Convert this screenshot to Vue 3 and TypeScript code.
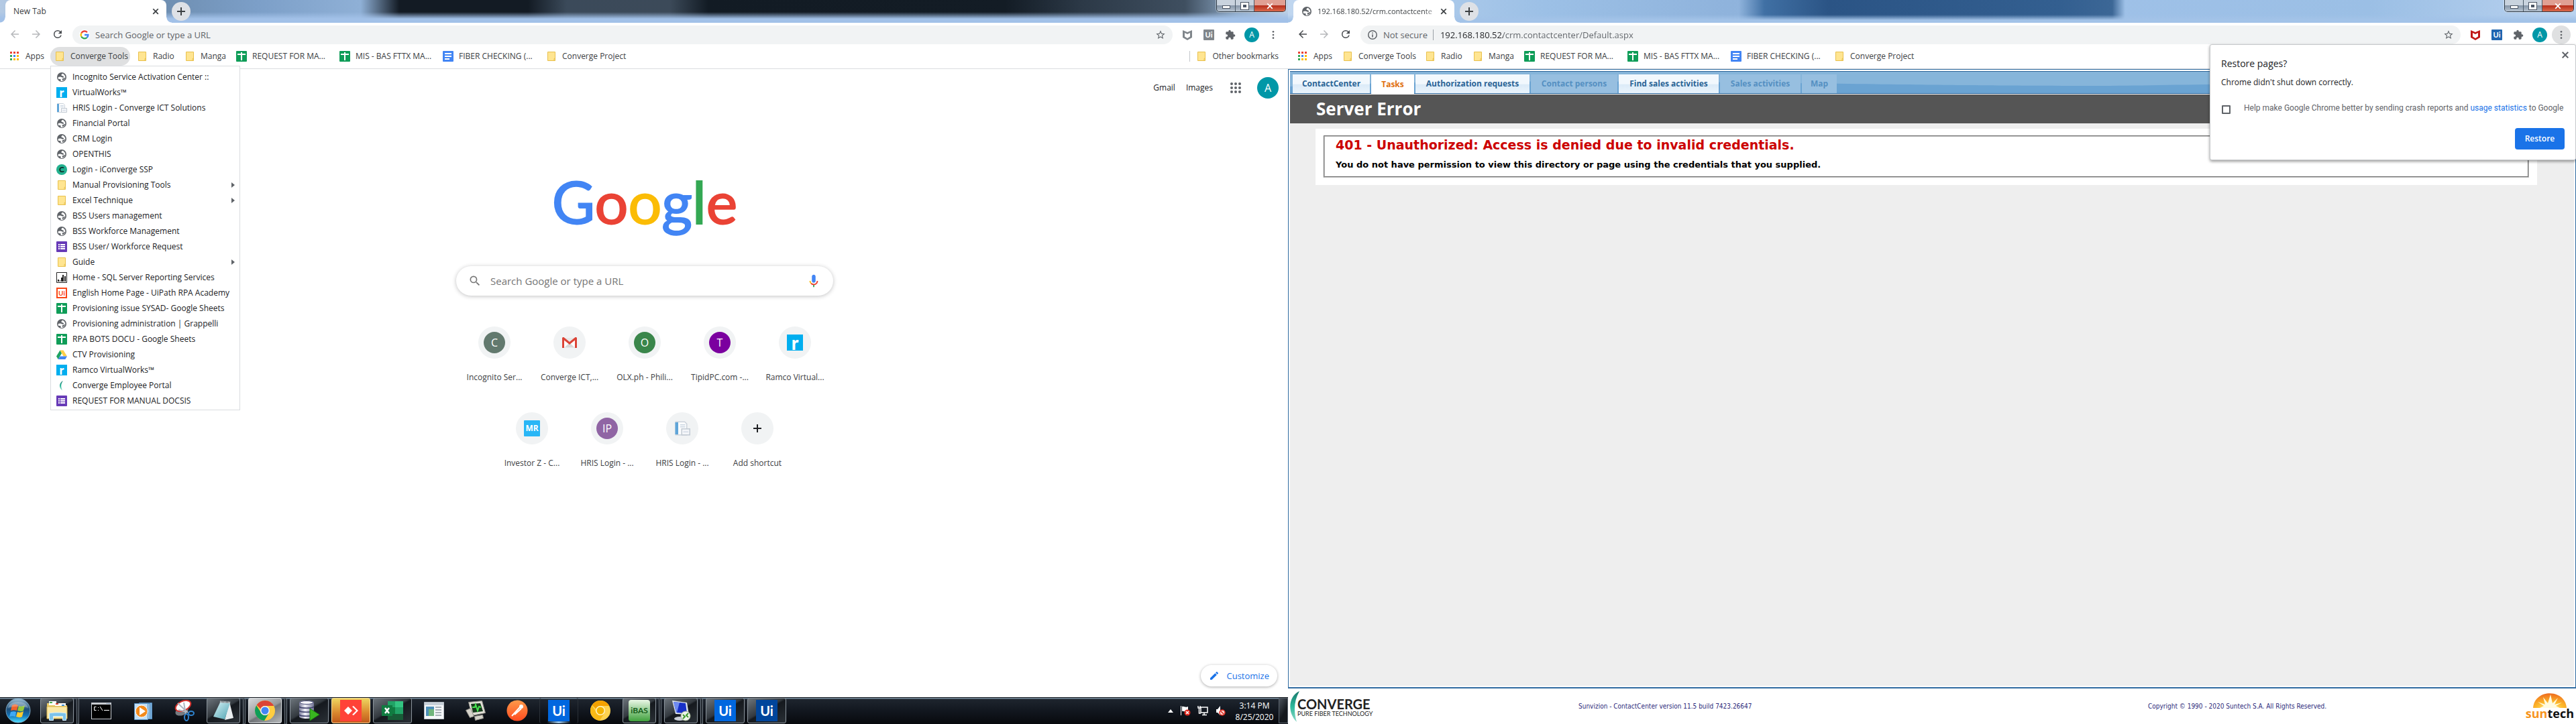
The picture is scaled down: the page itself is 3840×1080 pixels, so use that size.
<script setup lang="ts">
interface Bookmark {
  label: string
  icon: string
  width: number
  active?: boolean
}

interface MenuEntry {
  label: string
  icon?: string
  badge?: string
  text?: string
  submenu?: boolean
}

interface Shortcut {
  label: string
  disc?: string
  text?: string
  icon?: string
  badge?: string
}

interface Task {
  name: string
  icon?: string
  badge?: string
  text?: string
  state?: string
  stacked?: boolean
}

interface CrmTab {
  label: string
  width: number
  state: string
}

const bookmarks: Bookmark[] = [
  { label: 'Apps', icon: 'apps', width: 27 },
  { label: 'Converge Tools', icon: 'folder', width: 83, active: true },
  { label: 'Radio', icon: 'folder', width: 31 },
  { label: 'Manga', icon: 'folder', width: 37 },
  { label: 'REQUEST FOR MA...', icon: 'sheets', width: 114 },
  { label: 'MIS - BAS FTTX MA...', icon: 'sheets', width: 114 },
  { label: 'FIBER CHECKING (...', icon: 'docs', width: 114 },
  { label: 'Converge Project', icon: 'folder', width: 92 },
]

const windows = [
  { id: 'left', title: 'New Tab', secure: true },
  { id: 'right', title: '192.168.180.52/crm.contactcente', secure: false },
]

const menu: MenuEntry[] = [
  { label: 'Incognito Service Activation Center ::', icon: 'globe' },
  { label: 'VirtualWorks™', badge: 'ramco', text: 'r' },
  { label: 'HRIS Login - Converge ICT Solutions', icon: 'pages' },
  { label: 'Financial Portal', icon: 'globe' },
  { label: 'CRM Login', icon: 'globe' },
  { label: 'OPENTHIS', icon: 'globe' },
  { label: 'Login - iConverge SSP', badge: 'ssp', text: 'C' },
  { label: 'Manual Provisioning Tools', icon: 'folder', submenu: true },
  { label: 'Excel Technique', icon: 'folder', submenu: true },
  { label: 'BSS Users management', icon: 'globe' },
  { label: 'BSS Workforce Management', icon: 'globe' },
  { label: 'BSS User/ Workforce Request', icon: 'forms' },
  { label: 'Guide', icon: 'folder', submenu: true },
  { label: 'Home - SQL Server Reporting Services', icon: 'report' },
  { label: 'English Home Page - UiPath RPA Academy', badge: 'uipath', text: 'Ui' },
  { label: 'Provisioning issue SYSAD- Google Sheets', icon: 'sheets' },
  { label: 'Provisioning administration | Grappelli', icon: 'globe' },
  { label: 'RPA BOTS DOCU - Google Sheets', icon: 'sheets' },
  { label: 'CTV Provisioning', icon: 'drive' },
  { label: 'Ramco VirtualWorks™', badge: 'ramco', text: 'r' },
  { label: 'Converge Employee Portal', icon: 'leaf' },
  { label: 'REQUEST FOR MANUAL DOCSIS', icon: 'forms' },
]

const shortcuts: Shortcut[] = [
  { label: 'Incognito Ser...', disc: 'slate', text: 'C' },
  { label: 'Converge ICT,...', icon: 'gmail' },
  { label: 'OLX.ph - Phili...', disc: 'green', text: 'O' },
  { label: 'TipidPC.com -...', disc: 'purple', text: 'T' },
  { label: 'Ramco Virtual...', badge: 'ramco', text: 'r' },
  { label: 'Investor Z - C...', badge: 'investor', text: 'MR' },
  { label: 'HRIS Login - ...', disc: 'violet', text: 'IP' },
  { label: 'HRIS Login - ...', icon: 'pages' },
  { label: 'Add shortcut', icon: 'plus' },
]

const tasks: Task[] = [
  { name: 'Explorer', icon: 'explorer', state: 'open', stacked: true },
  { name: 'Command Prompt', icon: 'cmd' },
  { name: 'Media Player', icon: 'media' },
  { name: 'Snipping Tool', icon: 'snip' },
  { name: 'Notepad', icon: 'notepad', state: 'open', stacked: true },
  { name: 'Chrome', icon: 'chrome', state: 'current', stacked: true },
  { name: 'SQL Developer', icon: 'database', state: 'open' },
  { name: 'AnyDesk', icon: 'anydesk', state: 'alert' },
  { name: 'Excel', icon: 'excel', state: 'open' },
  { name: 'Program window', icon: 'window' },
  { name: 'PuTTY', icon: 'putty' },
  { name: 'Postman', icon: 'postman' },
  { name: 'UiPath Assistant', badge: 'ui-blue', text: 'Ui', state: 'glow' },
  { name: 'Chrome Canary', icon: 'canary' },
  { name: 'iBAS', badge: 'ibas', text: 'iBAS', state: 'open', stacked: true },
  { name: 'Remote Desktop', icon: 'remote', state: 'open', stacked: true },
  { name: 'UiPath Robot', badge: 'ui-blue', text: 'Ui', state: 'open' },
  { name: 'UiPath Studio', badge: 'ui-navy', text: 'Ui', state: 'open' },
]

const crmTabs: CrmTab[] = [
  { label: 'ContactCenter', width: 115, state: 'enabled' },
  { label: 'Tasks', width: 64, state: 'selected' },
  { label: 'Authorization requests', width: 170, state: 'enabled' },
  { label: 'Contact persons', width: 129, state: 'disabled' },
  { label: 'Find sales activities', width: 149, state: 'enabled' },
  { label: 'Sales activities', width: 120, state: 'disabled' },
  { label: 'Map', width: 52, state: 'disabled' },
]

const brand = [
  { letter: 'G', hue: 'blue' },
  { letter: 'o', hue: 'red' },
  { letter: 'o', hue: 'yellow' },
  { letter: 'g', hue: 'blue' },
  { letter: 'l', hue: 'green' },
  { letter: 'e', hue: 'red' },
]
</script>

<template>
  <svg class="sprite" aria-hidden="true">
    <defs>
      <linearGradient id="g-orb" x1="0" y1="0" x2="0" y2="1">
        <stop offset="0" stop-color="#9fc0d6" /><stop offset="0.45" stop-color="#1d4e7a" />
        <stop offset="0.7" stop-color="#1273b8" /><stop offset="1" stop-color="#4fe0ff" />
      </linearGradient>
      <linearGradient id="g-silver" x1="0" y1="0" x2="1" y2="0">
        <stop offset="0" stop-color="#7a7d9a" /><stop offset="0.4" stop-color="#f3f3fb" /><stop offset="1" stop-color="#6d7090" />
      </linearGradient>
      <linearGradient id="g-postman" x1="0" y1="0" x2="0" y2="1">
        <stop offset="0" stop-color="#ff9a4a" /><stop offset="1" stop-color="#ff4b1f" />
      </linearGradient>
      <linearGradient id="g-note" x1="0" y1="0" x2="1" y2="1">
        <stop offset="0" stop-color="#d6f2f6" /><stop offset="1" stop-color="#4fa3b2" />
      </linearGradient>
      <linearGradient id="g-leaf" x1="0" y1="0" x2="0" y2="1">
        <stop offset="0" stop-color="#17786c" /><stop offset="0.5" stop-color="#2eb89b" /><stop offset="1" stop-color="#8fd9c8" />
      </linearGradient>
      <radialGradient id="g-sun" cx="0.5" cy="1" r="1">
        <stop offset="0" stop-color="#fff3a0" /><stop offset="0.4" stop-color="#fdb92b" /><stop offset="1" stop-color="#ee6a1e" />
      </radialGradient>
      <symbol id="apps" viewBox="0 0 16 16">
        <path fill="#ea4335" d="M1 1h3v3H1zM6 1h3v3H6zM11 1h3v3h-3z" />
        <path fill="#34a853" d="M1 6h3v3H1z" /><path fill="#4285f4" d="M6 6h3v3H6z" /><path fill="#fbbc05" d="M11 6h3v3h-3z" />
        <path fill="#34a853" d="M1 11h3v3H1z" /><path fill="#fbbc05" d="M6 11h3v3H6zM11 11h3v3h-3z" />
      </symbol>
      <symbol id="folder" viewBox="0 0 16 16">
        <path fill="#ffe591" stroke="#e8c04c" d="M2.500 1.500h11v9.500l-1 1v2.500h-10z" />
        <path fill="#ffe591" stroke="#e8c04c" d="M12.500 11h1v3.500h-1.500v-2.500z" />
      </symbol>
      <symbol id="sheets" viewBox="0 0 16 16">
        <rect width="16" height="16" rx="1" fill="#0f9d58" /><path fill="#fff" d="M2 4h5V2h2v2h5v2H9v8H7V6H2z" />
      </symbol>
      <symbol id="docs" viewBox="0 0 16 16">
        <rect width="16" height="16" rx="1" fill="#4285f4" /><path fill="#fff" d="M3 3h10v2H3zM3 7h10v2H3zM3 11h7v2H3z" />
      </symbol>
      <symbol id="forms" viewBox="0 0 16 16">
        <rect width="16" height="16" rx="1" fill="#673ab7" /><path fill="#fff" d="M3 4h2v2H3zM6 4h7v2H6zM3 7h2v2H3zM6 7h7v2H6zM3 10h2v2H3zM6 10h7v2H6z" />
      </symbol>
      <symbol id="globe" viewBox="0 0 16 16">
        <circle cx="8" cy="8" r="7" fill="#5f6368" />
        <path fill="#fff" d="M9.500 2.800C8 3.500 7 4.500 7.600 5.600c.7 1 2.900.6 3.400 1.800.3.900-.6 1.500-1.500 1.300-1.300-.3-2.300-1.400-4.300-1.200-1.200.1-2.300.5-2.700 1.200.1 1 .4 1.800.9 2.500 1-.2 2.600-.3 3.100.4.4.8-.3 1.500.2 2.300 1.900.3 4-.5 5.200-2 .9-1.200 1.400-2.600 1.500-4-.2-1.800-1.600-4.200-3.900-5.100z" />
        <path fill="#5f6368" d="M8.500 10.200c1.200.3 2.600-.3 3.300-1.500l1.200.6c-.6 1.500-1.800 3-3.500 3.600-1-.1-.2-1.500-1-2.700z" />
      </symbol>
      <symbol id="pages" viewBox="0 0 16 16">
        <path fill="#fbfcfd" stroke="#ccd3db" d="M1.500 1.500h9l2 2v11h-11z" />
        <path fill="#5fa5d8" d="M1 2h3v12H1z" /><path fill="#cbd6e2" d="M6 4h5v1H6zM6 6h5v1H6z" />
        <path fill="#f4f6f9" stroke="#c2cad3" d="M7.500 8.500h8v6h-8z" /><path fill="#d4dbe6" d="M9 11h5v1H9z" />
      </symbol>
      <symbol id="report" viewBox="0 0 16 16">
        <path fill="#fff" stroke="#222" d="M.5.5h15v15H.5z" /><path fill="#222" d="M2 11h2v3H2zM5 12h1v2H5zM7 8h2v6H7zM9 4h2v10H9zM12 6h2v8h-2z" />
      </symbol>
      <symbol id="drive" viewBox="0 0 16 16">
        <path fill="#1ea362" d="M5.500 1.500L8 6 2.700 15 0 10.500z" /><path fill="#ffcf48" d="M5.500 1.500h5L16 10.500h-5.300z" />
        <path fill="#4285f4" d="M5.500 10.500H16L13.300 15H2.700z" />
      </symbol>
      <symbol id="leaf" viewBox="0 0 16 16"><path fill="url(#g-leaf)" d="M10 1C4 4 3 11 9 15.500 6.500 10 6.500 6 10 1z" /></symbol>
      <symbol id="gmail" viewBox="0 0 24 24">
        <path fill="#e8e8e8" d="M3 5h18v15H3z" /><path fill="#fff" d="M4 7l8 6 8-6v12H4z" /><path fill="#d8d8d8" d="M5 19l7-7 7 7z" />
        <path fill="#db4437" d="M1 5.500C1 4 3 3.600 4 4.500l8 6.500 8-6.500c1-.9 3-.5 3 1V20h-3V8.500L12 15 4 8.500V20H1z" />
      </symbol>
      <symbol id="plus" viewBox="0 0 24 24"><path fill="#202124" d="M11 6h2v5h5v2h-5v5h-2v-5H6v-2h5z" /></symbol>
      <symbol id="back" viewBox="0 0 24 24"><path d="M20 11H7.830l5.590-5.590L12 4l-8 8 8 8 1.410-1.410L7.830 13H20z" /></symbol>
      <symbol id="forward" viewBox="0 0 24 24"><path d="M4 11h12.170l-5.590-5.590L12 4l8 8-8 8-1.410-1.410L16.170 13H4z" /></symbol>
      <symbol id="reload" viewBox="0 0 24 24"><path d="M17.650 6.350A7.960 7.960 0 0 0 12 4a8 8 0 1 0 7.730 10h-2.080A6 6 0 1 1 12 6c1.660 0 3.140.690 4.220 1.780L13 11h7V4z" /></symbol>
      <symbol id="star" viewBox="0 0 24 24"><path d="M22 9.240l-7.190-.62L12 2 9.190 8.630 2 9.240l5.460 4.730L5.820 21 12 17.270 18.180 21l-1.630-7.030zM12 15.400l-3.760 2.270 1-4.280-3.320-2.880 4.380-.38L12 6.100l1.710 4.040 4.380.38-3.320 2.880 1 4.280z" /></symbol>
      <symbol id="puzzle" viewBox="0 0 24 24"><path d="M20.500 11H19V7a2 2 0 0 0-2-2h-4V3.500a2.500 2.500 0 0 0-5 0V5H4a2 2 0 0 0-2 2v3.800h1.500a2.700 2.700 0 0 1 0 5.400H2V20c0 1.100.9 2 2 2h3.800v-1.500a2.700 2.700 0 0 1 5.400 0V22H17a2 2 0 0 0 2-2v-4h1.500a2.500 2.500 0 0 0 0-5z" /></symbol>
      <symbol id="dots" viewBox="0 0 24 24"><circle cx="12" cy="5" r="2" /><circle cx="12" cy="12" r="2" /><circle cx="12" cy="19" r="2" /></symbol>
      <symbol id="shield" viewBox="0 0 16 16"><path d="M1 1l7 3 7-3v11l-7 4-7-4zm3 4v5.500L8 13l4-2.500V5L8 7z" /></symbol>
      <symbol id="info" viewBox="0 0 16 16"><path d="M8 1a7 7 0 1 0 0 14A7 7 0 0 0 8 1zm0 1.500a5.500 5.500 0 1 1 0 11 5.500 5.500 0 0 1 0-11zM7.200 4.500h1.600V6H7.200zM7.200 7.200h1.600v4.300H7.200z" /></symbol>
      <symbol id="google" viewBox="0 0 16 16">
        <g fill="none" stroke-width="2.400">
          <path stroke="#ea4335" d="M12 4.200A5.400 5.400 0 0 0 3.200 5.500" /><path stroke="#fbbc05" d="M3.200 5.500a5.400 5.400 0 0 0 0 5" />
          <path stroke="#34a853" d="M3.200 10.500A5.400 5.400 0 0 0 11.500 12.100" /><path stroke="#4285f4" d="M8 8h5.400A5.400 5.400 0 0 1 11.500 12.100" />
        </g>
      </symbol>
      <symbol id="search" viewBox="0 0 24 24"><path d="M15.500 14h-.79l-.28-.27A6.470 6.470 0 0 0 16 9.500 6.500 6.500 0 1 0 9.500 16c1.610 0 3.090-.59 4.230-1.570l.27.280v.79l5 4.990L20.490 19zm-6 0a4.500 4.500 0 1 1 0-9 4.500 4.500 0 0 1 0 9z" /></symbol>
      <symbol id="mic" viewBox="0 0 24 24">
        <path fill="#4285f4" d="M12 15c1.660 0 3-1.310 3-2.970V4.980C15 3.320 13.660 2 12 2S9 3.320 9 4.980v7.050C9 13.690 10.340 15 12 15z" />
        <path fill="#34a853" d="M11 18.080h2V22h-2z" /><path fill="#fbbc05" d="M7.050 16.870A6.950 6.950 0 0 1 5 12h2c0 1.450.56 2.420 1.470 3.380z" />
        <path fill="#ea4335" d="M12 16.930a4.970 4.970 0 0 1-3.540-1.550l-1.410 1.490A6.950 6.950 0 0 0 12 18.900c3.870 0 6.990-2.920 6.990-7h-1.990c0 2.920-2.240 5.030-5 5.030z" />
      </symbol>
      <symbol id="grid" viewBox="0 0 16 16">
        <circle v-for="n in 9" :key="n" :cx="2 + ((n - 1) % 3) * 6" :cy="2 + Math.floor((n - 1) / 3) * 6" r="2" />
      </symbol>
      <symbol id="pencil" viewBox="0 0 24 24"><path d="M3 17.250V21h3.750L17.810 9.940l-3.750-3.750zM20.710 7.040a1 1 0 0 0 0-1.410l-2.340-2.340a1 1 0 0 0-1.410 0l-1.830 1.830 3.750 3.750z" /></symbol>
      <symbol id="cross" viewBox="0 0 16 16"><path d="M3 4.400L4.400 3 8 6.600 11.600 3 13 4.400 9.400 8l3.600 3.600-1.400 1.400L8 9.400 4.400 13 3 11.600 6.600 8z" /></symbol>
      <symbol id="add" viewBox="0 0 16 16"><path d="M7 2h2v5h5v2H9v5H7V9H2V7h5z" /></symbol>

      <symbol id="orb" viewBox="0 0 38 38">
        <circle cx="19" cy="19" r="18" fill="url(#g-orb)" stroke="#7aa3be" />
        <path fill="#f0642c" d="M10 11c3-2 6-2 9 0l-2 8c-3-1-6-1-9 0z" /><path fill="#94c93d" d="M20 12c3 1 6 1 9-1l-2 8c-3 2-5 1-9 0z" />
        <path fill="#3fa9f5" d="M8 21c3-1 6-1 8 0l-1 7c-3-1-6-1-9 0z" /><path fill="#ffcb2e" d="M18 21c3 1 6 1 9-1l-2 8c-3 2-6 1-9 0z" />
        <path fill="#fff" opacity="0.250" d="M4 15C6 3 32 3 34 15c-8-3-22-3-30 0z" />
      </symbol>
      <symbol id="explorer" viewBox="0 0 32 32">
        <path fill="#e9c964" d="M1 5h10l2 3h18v20H1z" /><path fill="#fff" d="M4 2h11v6H4zM13 5h16v4H13z" /><path fill="#4caf50" d="M5 3h4v2H5z" /><path fill="#d9432f" d="M14 5h4v2h-4z" /><path fill="#3d8fd8" d="M23 7h4v2h-4z" />
        <path fill="#fbe9a6" stroke="#d9b44c" d="M1 10h30v18H1z" /><path fill="#7cc3ea" stroke="#d6f0ff" d="M4.500 20.500c0-2 25-2 25 0v10h-5v-6h-14v6h-6z" />
      </symbol>
      <symbol id="cmd" viewBox="0 0 32 32">
        <path fill="#c9cdd2" d="M1 4h30v25H1z" /><path fill="#000" d="M2 7h28v21H2z" /><path fill="#4d6d9e" d="M24 5h1v1h-1zM26 5h1v1h-1zM28 5h1v1h-1z" />
        <path fill="none" stroke="#fff" d="M8.500 10.500h-3v5h3M11.500 11v1M11.500 15v1M14 10l4 6M20 15.500h8" />
      </symbol>
      <symbol id="media" viewBox="0 0 32 32">
        <path fill="#7fb2dd" stroke="#4d86b8" d="M10.500 4.500h19v24h-19z" /><path fill="#a4ccec" stroke="#4d86b8" d="M7.500 5.500h19v23h-19z" /><path fill="#c2dff5" stroke="#5a93c4" d="M3.500 5.500h20v24h-20z" />
        <circle cx="14" cy="17" r="9" fill="#f28a1c" stroke="#fff" /><path fill="#fff" d="M11 11l9 6-9 6z" />
      </symbol>
      <symbol id="snip" viewBox="0 0 32 32">
        <ellipse cx="12" cy="17" rx="10" ry="6" fill="#777c82" transform="rotate(-20 12 17)" />
        <ellipse cx="14" cy="9" rx="12" ry="7" fill="#fff" stroke="#d3312d" stroke-width="2" transform="rotate(-25 14 9)" />
        <path fill="none" stroke="#aeb7c1" stroke-width="2" d="M6 5l15 14M15 4l3 18M7 15l13 3" /><ellipse cx="26" cy="20" rx="4" ry="3" fill="none" stroke="#2f84d0" stroke-width="2" /><ellipse cx="19" cy="26" rx="3" ry="5" fill="none" stroke="#2f84d0" stroke-width="2" />
      </symbol>
      <symbol id="notepad" viewBox="0 0 32 32">
        <path fill="#e9eef0" d="M25 3l6 24-13 3z" /><path fill="url(#g-note)" d="M11 4l15 1-8 24L1 25z" /><path fill="none" stroke="#e4eaec" stroke-width="3" stroke-dasharray="1 1" d="M11 3l15 1" />
      </symbol>
      <symbol id="chrome" viewBox="0 0 32 32">
        <circle cx="16" cy="16" r="15" fill="#ffcd40" /><path fill="#db4437" d="M16 1a15 15 0 0 1 13.200 8H16a7 7 0 0 0-6.500 4.500L3.600 7.800A15 15 0 0 1 16 1z" />
        <path fill="#0f9d58" d="M3.200 8.200A15 15 0 0 0 15 31l6.500-10.500a7 7 0 0 1-11.600-1.800z" /><circle cx="16" cy="16" r="7" fill="#f1f1f1" /><circle cx="16" cy="16" r="5.500" fill="#4285f4" />
      </symbol>
      <symbol id="canary" viewBox="0 0 32 32">
        <circle cx="16" cy="16" r="15" fill="#ffd34f" /><path fill="#f4a100" d="M16 1a15 15 0 0 1 13.200 8H16a7 7 0 0 0-6.500 4.500L3.600 7.800A15 15 0 0 1 16 1z" />
        <path fill="#f9b916" d="M3.200 8.200A15 15 0 0 0 15 31l6.500-10.500a7 7 0 0 1-11.600-1.800z" /><circle cx="16" cy="16" r="7" fill="#fff3c4" /><circle cx="16" cy="16" r="5.500" fill="#f4b400" />
      </symbol>
      <symbol id="database" viewBox="0 0 32 32">
        <path fill="url(#g-silver)" d="M1 4c0-4 22-4 22 0v21c0 4-22 4-22 0z" /><ellipse cx="12" cy="4" rx="10" ry="2.500" fill="#f6f6fc" stroke="#4b4e78" /><path fill="none" stroke="#3f426c" stroke-width="1.500" d="M1 10c2 3 20 3 22 0M1 16c2 3 20 3 22 0M1 22c2 3 20 3 22 0" />
        <path fill="#39b620" stroke="#1c7a10" d="M17 13l14 9-14 9z" />
      </symbol>
      <symbol id="anydesk" viewBox="0 0 32 32"><path fill="#ff4238" d="M0 0h32v32H0z" /><path fill="#fff" d="M12 10l6 6-6 6-6-6zM18 10l2-1 7 7-7 7-2-1 6-6z" /></symbol>
      <symbol id="excel" viewBox="0 0 32 32">
        <path fill="#21a366" d="M9 2h11v9H9z" /><path fill="#33c481" d="M20 2h12v9H20z" /><path fill="#107c41" d="M9 11h11v10H9z" /><path fill="#21a366" d="M20 11h12v10H20z" /><path fill="#185c37" d="M9 21h23v9H9z" />
        <path fill="#107c41" d="M0 8h16v16H0z" /><path stroke="#fff" stroke-width="2.500" d="M5 12l6 8M11 12l-6 8" />
      </symbol>
      <symbol id="window" viewBox="0 0 32 32">
        <path fill="#f5f7f9" stroke="#b5bcc4" d="M1.500 3.500h29v25h-29z" /><path fill="#c7d0d9" d="M2 4h28v4H2z" /><path fill="#4d8fb8" d="M4 10h12v14H4z" /><path fill="#71b57c" d="M8 14h8v10H8z" /><path fill="#a8b0b8" d="M18 10h9v2h-9zM18 14h9v2h-9zM18 18h9v2h-9zM18 22h9v2h-9z" />
      </symbol>
      <symbol id="putty" viewBox="0 0 32 32">
        <path fill="#e2e0d8" stroke="#8d8b84" d="M5.500 3.500l20-2 5 18-20 4z" /><path fill="#173a1c" d="M9 6l14-1 4 12-15 2z" /><path fill="none" stroke="#45e34d" stroke-width="2" d="M11 11h4l1-4 3 9 2-6 3 1" /><path fill="#d5d3ca" stroke="#8d8b84" d="M14.500 24.500l12-2 1 5-12 3zM1.500 15.500l7-3 5 12-6 2z" />
      </symbol>
      <symbol id="postman" viewBox="0 0 32 32"><circle cx="16" cy="16" r="15.500" fill="url(#g-postman)" /><path fill="none" stroke="#fff" stroke-width="2" d="M8 24l12-13M12 22l10-9" /><circle cx="22" cy="10" r="3" fill="#fff" /></symbol>
      <symbol id="remote" viewBox="0 0 32 32">
        <path fill="#dfe5ec" d="M3 1l22 3 3 18-20-1z" /><path fill="#1730c8" d="M5 3l18 2 2 15-16-1z" /><path fill="#6f8bf0" d="M5 3l9 1-4 15H9z" /><ellipse cx="14" cy="28" rx="8" ry="3" fill="#c9ced6" />
        <circle cx="23" cy="24" r="7" fill="#eef3ea" stroke="#9fb092" /><path fill="none" stroke="#3d9a2c" stroke-width="2" d="M19 22l3 3-3 3M27 20l-3 3 3 3" />
      </symbol>
      <symbol id="flag" viewBox="0 0 16 16"><path fill="#fff" d="M1 1h1v14H1zM3 2c3-1 5 2 9 0v7c-4 2-6-1-9 0z" /><circle cx="11" cy="11" r="4.500" fill="#e0261b" /><path stroke="#fff" stroke-width="1.500" d="M9 9l4 4M13 9l-4 4" /></symbol>
      <symbol id="network" viewBox="0 0 16 16"><path fill="none" stroke="#fff" stroke-width="1.500" d="M5 3h10v8H5zM10 11v3M7 14.500h7M1 1v3h3V1M2.500 4v8H5" /></symbol>
      <symbol id="speaker" viewBox="0 0 16 16"><path fill="#fff" d="M2 6h2l4-5v14l-4-4H2z" /><circle cx="11" cy="11" r="4" fill="#f6d6d3" stroke="#e0261b" stroke-width="1.500" /><path stroke="#e0261b" stroke-width="1.500" d="M8.500 8.500l5 5" /></symbol>
    </defs>
  </svg>

  <main class="desktop">
    <section v-for="win in windows" :key="win.id" class="screen" :class="win.id">
      <header class="titlebar">
        <div class="tab">
          <svg v-if="!win.secure" class="i16 globe"><use href="#globe" /></svg>
          <span class="tab-title">{{ win.title }}</span>
          <button class="plain tab-close" aria-label="Close tab"><svg class="i14"><use href="#cross" /></svg></button>
        </div>
        <button class="plain new-tab" aria-label="New tab"><svg class="i16"><use href="#add" /></svg></button>
        <div class="caption">
          <button class="cap-min" aria-label="Minimize"><span></span></button>
          <button class="cap-max" aria-label="Restore"><span></span></button>
          <button class="cap-close" aria-label="Close"><svg class="i14"><use href="#cross" /></svg></button>
        </div>
      </header>

      <div class="toolbar">
        <button class="plain nav" :class="{ dim: win.secure }" aria-label="Back"><svg class="i18"><use href="#back" /></svg></button>
        <button class="plain nav dim" aria-label="Forward"><svg class="i18"><use href="#forward" /></svg></button>
        <button class="plain nav" aria-label="Reload"><svg class="i18"><use href="#reload" /></svg></button>
        <div class="omnibox">
          <template v-if="win.secure">
            <svg class="i16 g-mark"><use href="#google" /></svg>
            <input class="address" type="text" aria-label="Address" placeholder="Search Google or type a URL" />
          </template>
          <template v-else>
            <svg class="i16"><use href="#info" /></svg>
            <span class="not-secure">Not secure</span>
            <input class="address url" type="text" aria-label="Address" value="192.168.180.52/crm.contactcenter/Default.aspx" />
          </template>
          <button class="plain" aria-label="Bookmark"><svg class="i16"><use href="#star" /></svg></button>
        </div>
        <button class="plain ext shield" aria-label="Safe browsing"><svg class="i16"><use href="#shield" /></svg></button>
        <button class="plain ext" aria-label="UiPath"><span class="badge ui-ext">Ui</span></button>
        <button class="plain ext" aria-label="Extensions"><svg class="i16"><use href="#puzzle" /></svg></button>
        <button class="plain ext profile">A</button>
        <button class="plain ext more" aria-label="Menu"><svg class="i16"><use href="#dots" /></svg></button>
      </div>

      <nav class="bookmarks">
        <div v-for="b in bookmarks" :key="b.label" class="bookmark-slot">
          <a href="#" class="bookmark" :class="{ active: b.active && win.secure }">
            <svg class="i16"><use :href="'#' + b.icon" /></svg>
            <span :style="{ width: b.width + 'px' }">{{ b.label }}</span>
          </a>
          <ul v-if="b.active && win.secure" class="menu">
            <li v-for="m in menu" :key="m.label">
              <a href="#">
                <svg v-if="m.icon" class="i16"><use :href="'#' + m.icon" /></svg>
                <span v-else class="badge" :class="m.badge">{{ m.text }}</span>
                <span class="menu-label">{{ m.label }}</span>
                <span v-if="m.submenu" class="arrow"></span>
              </a>
            </li>
          </ul>
        </div>
        <a v-if="win.secure" href="#" class="bookmark other">
          <svg class="i16"><use href="#folder" /></svg><span>Other bookmarks</span>
        </a>
      </nav>

      <template v-if="win.secure">
        <div class="ntp">
          <div class="ntp-top">
            <a href="#">Gmail</a><a href="#">Images</a>
            <button class="plain" aria-label="Google apps"><svg class="i16"><use href="#grid" /></svg></button>
            <button class="plain account">A</button>
          </div>
          <h1 class="brand"><span v-for="(c, i) in brand" :key="i" :class="c.hue">{{ c.letter }}</span></h1>
          <label class="search">
            <svg class="i20"><use href="#search" /></svg>
            <input type="text" placeholder="Search Google or type a URL" />
            <svg class="i22"><use href="#mic" /></svg>
          </label>
          <div class="tiles">
            <a v-for="(s, i) in shortcuts" :key="i" href="#" class="tile">
              <span class="tile-icon">
                <span v-if="s.disc" class="disc" :class="s.disc">{{ s.text }}</span>
                <svg v-else-if="s.icon" class="i24"><use :href="'#' + s.icon" /></svg>
                <span v-else class="badge large" :class="s.badge">{{ s.text }}</span>
              </span>
              <span class="tile-label">{{ s.label }}</span>
            </a>
          </div>
          <button class="customize"><svg class="i16"><use href="#pencil" /></svg>Customize</button>
        </div>

        <footer class="taskbar">
          <button class="plain start" aria-label="Start"><svg class="i38"><use href="#orb" /></svg></button>
          <div v-for="t in tasks" :key="t.name" class="task-slot" :class="{ stacked: t.stacked }">
            <button class="task" :class="t.state" :aria-label="t.name">
              <svg v-if="t.icon" class="i32"><use :href="'#' + t.icon" /></svg>
              <span v-else class="badge huge" :class="t.badge">{{ t.text }}</span>
            </button>
          </div>
          <div class="tray">
            <span class="tray-arrow"></span>
            <svg class="i16"><use href="#flag" /></svg>
            <svg class="i16"><use href="#network" /></svg>
            <svg class="i16"><use href="#speaker" /></svg>
            <div class="clock"><span>3:14 PM</span><span>8/25/2020</span></div>
            <button class="peek" aria-label="Show desktop"></button>
          </div>
        </footer>
      </template>

      <template v-else>
        <aside class="restore">
          <button class="plain restore-close" aria-label="Dismiss"><svg class="i16"><use href="#cross" /></svg></button>
          <h2>Restore pages?</h2>
          <p>Chrome didn't shut down correctly.</p>
          <div class="consent">
            <input id="crash-reports" type="checkbox" />
            <label for="crash-reports">Help make Google Chrome better by sending crash reports and <a href="#">usage statistics</a> to Google</label>
          </div>
          <button class="restore-button">Restore</button>
        </aside>

        <div class="crm">
          <nav class="crm-tabs">
            <svg class="wave" viewBox="0 0 1913 32" preserveAspectRatio="none" aria-hidden="true">
              <path fill="#6aa3d2" d="M0 22C200 12 500 14 750 17S1000 20 1150 21s300-7 763-4v15H0z" />
            </svg>
            <button v-for="t in crmTabs" :key="t.label" class="crm-tab" :class="t.state" :style="{ width: t.width + 'px' }">{{ t.label }}</button>
          </nav>
          <div class="error-head"><h1>Server Error</h1></div>
          <div class="error-body">
            <div class="card">
              <div class="fieldset">
                <h2>401 - Unauthorized: Access is denied due to invalid credentials.</h2>
                <h3>You do not have permission to view this directory or page using the credentials that you supplied.</h3>
              </div>
            </div>
          </div>
        </div>
        <footer class="crm-foot">
          <div class="converge">
            <svg class="converge-leaf" viewBox="0 0 14 46"><path fill="url(#g-leaf)" d="M14 0C-3 8-4 32 10 46 5 30 6 14 14 0z" /></svg>
            <div><strong>CONVERGE</strong><small>PURE FIBER TECHNOLOGY</small></div>
          </div>
          <span class="version">Sunvizion - ContactCenter version 11.5 build 7423.26647</span>
          <span class="copyright">Copyright © 1990 - 2020 Suntech S.A. All Rights Reserved.</span>
          <div class="suntech">
            <svg viewBox="0 0 50 22"><path fill="url(#g-sun)" d="M0 22C2-7 48-7 50 22z" /><path fill="#fffbe0" d="M10 22l6-3-9-6 11 4-3-11 7 9 4-13 3 13 8-8-5 10 11-3-9 5 6 3z" /></svg>
            <strong><span>sun</span>tech</strong>
          </div>
        </footer>
      </template>
    </section>
  </main>
</template>

<style>
body {
  margin: 0;
  background: #fff;
}
</style>

<style scoped>
.sprite { position: absolute; width: 0; height: 0; }
.desktop {
  display: flex;
  min-height: 100vh;
  font-family: "Open Sans", "Noto Sans", sans-serif;
  font-size: 12px;
  line-height: 16px;
  color: #202124;
}
.desktop * { box-sizing: border-box; }
.desktop svg { display: block; flex: none; fill: currentColor; }
.screen { position: relative; flex: 1; min-width: 0; display: flex; flex-direction: column; background: #fff; }
a { color: inherit; text-decoration: none; }
button, input { font: inherit; color: inherit; margin: 0; }
h1, h2, h3, p, ul { margin: 0; padding: 0; }
ul { list-style: none; }
.plain { border: 0; padding: 0; background: none; display: flex; align-items: center; justify-content: center; flex: none; }
.i14 { width: 14px; height: 14px; }
.i16 { width: 16px; height: 16px; }
.i18 { width: 18px; height: 18px; }
.i20 { width: 20px; height: 20px; }
.i22 { width: 22px; height: 22px; }
.i24 { width: 24px; height: 24px; }
.i32 { width: 32px; height: 32px; }
.i38 { width: 38px; height: 38px; }

/* title bar */
.titlebar { display: flex; height: 34px; padding-left: 8px; }
.left .titlebar {
  background:
    linear-gradient(180deg, transparent 18px, #a2c1e8 28px),
    linear-gradient(90deg, #b4cae4 0%, #6f8fb2 13%, #7c9fc8 20%, #8fb0d6 28%, #131b24 31%, #131b24 41%, #3b4a5a 44%, #3c4a59 52%, #121b24 55%, #131c25 78%, #2c3947 84%, #3f4f60 92%, #8ea9c6 96%, #bcd0e6 100%);
}
.right .titlebar {
  background:
    linear-gradient(180deg, transparent 22px, #a3c3e8 30px),
    linear-gradient(90deg, transparent 35%, #4070a4 37%, #2b5485 42%, #335f90 60%, #3c6796 64%, transparent 65%),
    linear-gradient(90deg, #c0d6ef 0%, #9cc0e6 20%, #8fb3dc 34%, #9fc1e8 60%, #9bbfe5 84%, #b9d2ef 100%);
}
.tab { position: relative; display: flex; align-items: center; width: 240px; padding: 0 9px 0 12px; background: #fff; border-radius: 8px 8px 0 0; }
.tab::before, .tab::after { content: ""; position: absolute; bottom: 0; width: 8px; height: 8px; }
.tab::before { right: 100%; background: radial-gradient(circle at 0 0, transparent 7px, #fff 8px); }
.tab::after { left: 100%; background: radial-gradient(circle at 100% 0, transparent 7px, #fff 8px); }
.tab-title { flex: 1; white-space: nowrap; color: #3c4043; }
.right .tab-title { font-size: 11px; mask-image: linear-gradient(90deg, #000 88%, transparent); }
.globe { margin-right: 8px; color: #5f6368; }
.tab-close { color: #3c4043; }
.new-tab { width: 28px; height: 28px; margin: 3px 0 0 8px; border-radius: 50%; background: #dee1e6; color: #3c4043; }
.caption { display: flex; height: 18px; margin: 0 3px 0 auto; border: 1px solid #2c3844; border-top: 0; border-radius: 0 0 5px 5px; overflow: hidden; box-shadow: 0 0 0 1px #ffffff66; }
.caption button { display: flex; align-items: center; justify-content: center; width: 28px; padding: 0; border: 0; border-right: 1px solid #4b5a68; background: linear-gradient(#c9d3de 0 45%, #8797a9 50%, #b6c3d0); color: #fff; }
.caption .cap-close { width: 46px; border: 0; background: linear-gradient(#e0a093 0 45%, #b8301c 50%, #d96a4c); }
.cap-min span { width: 12px; height: 5px; margin-top: 3px; border: 1px solid #4b5564; background: #fff; }
.cap-max span { width: 11px; height: 10px; border: 3px solid #fff; outline: 1px solid #4b5564; background: #4b5564; }

/* toolbar */
.toolbar { display: flex; align-items: center; height: 36px; padding: 0 6px 2px 6px; color: #5f6368; }
.nav { width: 32px; height: 28px; color: #494c50; }
.nav.dim { color: #b6b8bb; }
.omnibox { flex: 1; display: flex; align-items: center; height: 28px; margin: 2px 6px 0 6px; padding: 0 10px; border-radius: 14px; background: #f1f3f4; }
.g-mark { border-radius: 50%; background: #fff; }
.address { flex: 1; min-width: 0; margin-left: 8px; padding: 0; border: 0; outline: 0; background: none; font-size: 13px; line-height: 20px; color: #202124; }
.address::placeholder { color: #5f6368; opacity: 1; }
.not-secure { margin-left: 8px; padding-right: 8px; border-right: 1px solid #9aa0a6; font-size: 13px; }
.url { margin-left: 10px; -webkit-background-clip: text; background-clip: text; background-image: linear-gradient(90deg, #202124 94px, #5f6368 94px); -webkit-text-fill-color: transparent; }
.ext { width: 22px; height: 22px; margin: 2px 5px 0; }
.shield { color: #80868b; }
.right .shield { color: #c01818; }
.profile { border-radius: 50%; background: #0097a7; color: #fff; font-size: 12px; }
.right .more { width: 28px; height: 28px; margin: 2px 2px 0; border-radius: 50%; background: #dfe0e1; }
.badge { display: flex; flex: none; align-items: center; justify-content: center; width: 16px; height: 16px; font: 700 11px/16px "Lato", sans-serif; color: #fff; }
.badge.large { width: 24px; height: 24px; }
.badge.huge { width: 32px; height: 32px; font: 700 20px/32px "Lato", sans-serif; }
.ui-ext { background: #80868b; border-radius: 1px; }
.right .ui-ext { background: #1f66b0; }
.ramco { background: #00aeef; font-size: 18px; line-height: 12px; font-weight: 900; }
.ramco.large { font-size: 28px; }
.ssp { border-radius: 50%; background: #23b08f; color: #0e2b27; font-size: 12px; font-weight: 900; }
.uipath { border: 2px solid #fa4616; color: #fa4616; background: #fff; font-size: 10px; }
.investor { background: #29b6f6; font: 700 12px/24px "Open Sans", sans-serif; border-radius: 1px; }
.ui-blue { background: #0067df; }
.ui-navy { background: #00459b; }
.huge.ibas { border-radius: 4px; background: linear-gradient(#eaf7e6, #3fa13c); color: #145c19; font-size: 12px; }

/* bookmarks */
.bookmarks { display: flex; height: 33px; padding: 0 14px 4px 8px; border-bottom: 1px solid #dadce0; color: #3c4043; }
.bookmark-slot { position: relative; margin-right: 4px; }
.bookmark { display: flex; align-items: center; gap: 8px; height: 28px; padding: 0 6px; border-radius: 14px; white-space: nowrap; }
.bookmark.active { background: #dfe0e1; }
.other { position: relative; margin-left: auto; padding: 0; border-radius: 0; }
.other::before { content: ""; height: 16px; margin-right: 1px; border-left: 1px solid #c4c7cb; }
.menu { position: absolute; z-index: 3; top: 28px; left: 0; width: 283px; padding: 4px 0 2px; border: 1px solid #dadce0; background: #fff; color: #202124; }
.menu a { display: flex; align-items: center; gap: 8px; height: 23px; padding: 0 7px 0 8px; }
.menu-label { flex: 1; white-space: nowrap; }
.arrow { border: 4px solid transparent; border-left: 5px solid #5f6368; border-right: 0; }

/* new tab page */
.ntp { flex: 1; display: flex; flex-direction: column; align-items: center; padding: 0 14px 0 16px; }
.ntp-top { align-self: stretch; display: flex; align-items: center; justify-content: flex-end; gap: 16px; height: 32px; margin-top: 12px; }
.ntp-top .plain { color: #5f6368; margin-left: 10px; }
.ntp-top .account { width: 32px; height: 32px; margin-left: 8px; border-radius: 50%; background: #0097a7; color: #fff; font-size: 16px; }
.brand { height: 92px; margin-top: 107px; font: 400 88px/92px "Lato", sans-serif; -webkit-text-stroke: 2px currentColor; }
.brand .blue { color: #4285f4; }
.brand .red { color: #ea4335; }
.brand .yellow { color: #fbbc05; }
.brand .green { color: #34a853; }
.search { display: flex; align-items: center; width: 562px; height: 44px; margin-top: 51px; padding: 0 18px; border-radius: 22px; background: #fff; box-shadow: 0 1px 6px 0 #20212447; color: #757575; }
.search input { flex: 1; min-width: 0; margin-left: 13px; padding: 0; border: 0; outline: 0; font-size: 15px; line-height: 24px; }
.search input::placeholder { color: #757575; opacity: 1; }
.tiles { display: flex; flex-wrap: wrap; justify-content: center; width: 560px; margin-top: 30px; }
.tile { display: flex; flex-direction: column; align-items: center; width: 112px; height: 128px; padding-top: 16px; }
.tile-icon { display: flex; align-items: center; justify-content: center; width: 48px; height: 48px; margin-bottom: 20px; border-radius: 50%; background: #f1f3f4; }
.tile-label { color: #3c4043; white-space: nowrap; }
.disc { width: 32px; height: 32px; border-radius: 50%; color: #fff; font-size: 16px; line-height: 32px; text-align: center; }
.slate { background: #62796e; }
.disc.green { background: #3a864b; }
.purple { background: #7b009f; }
.violet { background: #9065a4; }
.customize { align-self: flex-end; display: flex; align-items: center; gap: 10px; height: 32px; margin: auto 2px 16px 0; padding: 0 12px; border: 0; border-radius: 16px; background: #fff; box-shadow: 0 1px 4px #00000055; color: #1a73e8; font-size: 13px; }

/* taskbar */
.taskbar { display: flex; height: 40px; background: linear-gradient(#0b1016 0 1px, #7d92a3 1px 2px, #1e252e 3px, #12171f 50%, #07090d); color: #fff; }
.start { width: 58px; padding-right: 4px; }
.task-slot { position: relative; width: 62px; padding: 1px 2px; }
.task { display: flex; align-items: center; justify-content: center; width: 58px; height: 38px; padding: 0; border: 1px solid transparent; border-radius: 3px; background: none; }
.stacked .task { width: 50px; }
.stacked::after { content: ""; position: absolute; top: 1px; left: 52px; width: 7px; height: 38px; border: solid #6b747d; border-width: 1px 1px 1px 0; border-radius: 0 3px 3px 0; box-shadow: inset -3px 0 0 -1px #20262d, inset -4px 0 0 -1px #6b747d; }
.task.open { border-color: #8b949c; background: linear-gradient(150deg, #6c747b, #33393f 45%, #15191e 50%, #2a3036); }
.task.current { border-color: #dfe3e6; background: linear-gradient(150deg, #d6d8da, #96999c 50%, #707478 55%, #b5b8ba); }
.task.alert { border-color: #f7dc9a; background: linear-gradient(#edd55f, #d9862d 60%, #c05a1c); }
.task.glow { background: radial-gradient(ellipse at 50% 100%, #9ccaf0, transparent 45%); border-color: #2b3138; border-width: 0 1px; }
.tray { display: flex; align-items: center; gap: 10px; margin-left: auto; }
.tray-arrow { border: 4px solid transparent; border-bottom: 5px solid #fff; border-top: 0; }
.clock { display: flex; flex-direction: column; align-items: center; width: 60px; margin: 2px -4px 0 3px; line-height: 17px; white-space: nowrap; }
.peek { width: 14px; height: 38px; padding: 0; border: 1px solid #5a636d; background: linear-gradient(120deg, #4a525b, #14181d 60%); }

/* restore bubble */
.restore { position: absolute; z-index: 3; top: 66px; right: 0; width: 546px; height: 173px; padding: 18px 16px 15px; display: flex; flex-direction: column; border: 1px solid #c6c8cb; border-radius: 3px; background: #fff; box-shadow: 0 2px 4px #00000066; }
.restore-close { position: absolute; top: 7px; right: 7px; color: #5f6368; }
.restore h2 { font-weight: 400; font-size: 14px; line-height: 20px; }
.restore p { margin-top: 10px; color: #202124; }
.consent { display: flex; align-items: center; gap: 19px; margin-top: 21px; color: #5f6368; font-family: Roboto, sans-serif; white-space: nowrap; }
.consent input { appearance: none; width: 13px; height: 13px; margin: 5px 1px 0; border: 2px solid #5f6368; border-radius: 1px; background: #fff; }
.consent a { color: #1a73e8; }
.restore-button { align-self: flex-end; width: 74px; height: 32px; margin-top: auto; padding: 0; border: 0; border-radius: 4px; background: #1a73e8; color: #fff; font-weight: 600; }

/* crm page */
.crm { flex: 1; display: flex; flex-direction: column; padding: 2px; border: 1px solid #2f6ba0; border-bottom-width: 2px; }
.crm-tabs { position: relative; display: flex; gap: 2px; height: 34px; padding: 4px 4px 0; border: solid #2c6598; border-width: 1px 0; background: #86b5da; }
.crm-tabs .wave { position: absolute; inset: 0; width: 100%; height: 32px; }
.crm-tab { position: relative; padding: 0; border: 0; font: 700 12px/28px "Open Sans", sans-serif; white-space: nowrap; background: linear-gradient(#f2f8fd 50%, #dcebf8 55%, #eaf4fc); color: #2a6496; }
.crm-tab.selected { margin-bottom: -1px; background: #fff; color: #e0700f; }
.crm-tab.disabled { background: #97bfe0; color: #5590c2; }
.error-head { margin-top: 1px; padding: 0 39px; background: #555; }
.error-head h1 { font: 700 26px/43px "Open Sans", sans-serif; color: #fff; }
.error-body { flex: 1; padding: 8px 55px 0 38px; background: #eee; }
.card { padding: 10px 12px 11px; background: #fff; }
.fieldset { height: 63px; padding: 0 16px; border: 2px groove #c0c0c0; font-family: "DejaVu Sans", Verdana, sans-serif; }
.fieldset h2 { font-size: 19px; line-height: 24px; color: #c00; }
.fieldset h3 { margin-top: 9px; font-size: 13px; line-height: 18px; color: #000; }
.crm-foot { display: grid; grid-template-columns: 430px 849px 1fr auto; align-items: center; height: 53px; padding: 0 3px; color: #2e2b7c; font: 10px/16px "DejaVu Sans Condensed", "DejaVu Sans", sans-serif; }
.converge { display: flex; align-items: center; color: #222; }
.converge-leaf { width: 14px; height: 46px; margin-right: -3px; }
.converge strong { display: block; margin-top: 4px; font: 700 20px/18px "Lato", sans-serif; }
.converge small { display: block; font: 9px/12px "Lato", sans-serif; }
.suntech { display: flex; flex-direction: column; align-items: center; }
.suntech svg { width: 50px; height: 22px; }
.suntech strong { font: 700 18px/17px "Open Sans", sans-serif; color: #111; }
.suntech strong span { color: #f7941d; }
</style>
